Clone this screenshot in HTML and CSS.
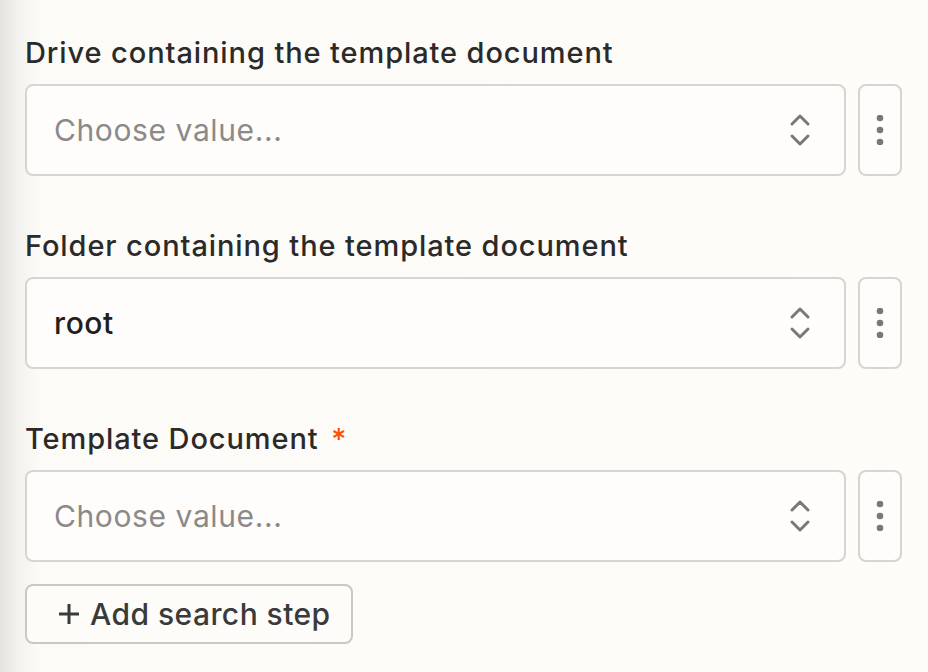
FILE: index.html
```html
<!DOCTYPE html>
<html lang="en">
<head>
    <meta charset="UTF-8">
    <meta name="viewport" content="width=device-width, initial-scale=1.0">
    <title>Template Document Fields</title>
    <link rel="stylesheet" href="styles.css">
</head>
<body>
    <div class="panel">
        <div class="field">
            <label class="field-label">Drive containing the template document</label>
            <div class="field-row">
                <div class="select-box">
                    <span class="placeholder">Choose value...</span>
                    <svg class="chevrons" width="22" height="36" viewBox="0 0 22 36"><path d="M3 12 L11 4 L19 12 M3 24 L11 32 L19 24" fill="none" stroke="#787878" stroke-width="3" stroke-linecap="round" stroke-linejoin="round"/></svg>
                </div>
                <button class="more-button" aria-label="More">
                    <svg width="8" height="30" viewBox="0 0 8 30"><circle cx="4" cy="3" r="3.3" fill="#787878"/><circle cx="4" cy="15" r="3.3" fill="#787878"/><circle cx="4" cy="27" r="3.3" fill="#787878"/></svg>
                </button>
            </div>
        </div>

        <div class="field">
            <label class="field-label">Folder containing the template document</label>
            <div class="field-row">
                <div class="select-box">
                    <span class="value">root</span>
                    <svg class="chevrons" width="22" height="36" viewBox="0 0 22 36"><path d="M3 12 L11 4 L19 12 M3 24 L11 32 L19 24" fill="none" stroke="#787878" stroke-width="3" stroke-linecap="round" stroke-linejoin="round"/></svg>
                </div>
                <button class="more-button" aria-label="More">
                    <svg width="8" height="30" viewBox="0 0 8 30"><circle cx="4" cy="3" r="3.3" fill="#787878"/><circle cx="4" cy="15" r="3.3" fill="#787878"/><circle cx="4" cy="27" r="3.3" fill="#787878"/></svg>
                </button>
            </div>
        </div>

        <div class="field last">
            <label class="field-label">Template Document <span class="required">*</span></label>
            <div class="field-row">
                <div class="select-box">
                    <span class="placeholder">Choose value...</span>
                    <svg class="chevrons" width="22" height="36" viewBox="0 0 22 36"><path d="M3 12 L11 4 L19 12 M3 24 L11 32 L19 24" fill="none" stroke="#787878" stroke-width="3" stroke-linecap="round" stroke-linejoin="round"/></svg>
                </div>
                <button class="more-button" aria-label="More">
                    <svg width="8" height="30" viewBox="0 0 8 30"><circle cx="4" cy="3" r="3.3" fill="#787878"/><circle cx="4" cy="15" r="3.3" fill="#787878"/><circle cx="4" cy="27" r="3.3" fill="#787878"/></svg>
                </button>
            </div>
        </div>

        <button class="add-step">
            <svg width="22" height="22" viewBox="0 0 22 22"><path d="M11 1 V21 M1 11 H21" stroke="#3a3a3a" stroke-width="3"/></svg>
            <span>Add search step</span>
        </button>
    </div>
</body>
</html>
```

FILE: styles.css
```css
body {
    margin: 0;
    font-family: Inter, "Noto Sans", sans-serif;
    background: linear-gradient(to right, #e4e3e0 0px, #f3f2ef 18px, #fcfbf8 40px, #fdfcf9 100%);
    color: #2b2a29;
    min-height: 672px;
}

.panel {
    padding: 36px 26px 0 25px;
}

.field {
    margin-bottom: 53px;
}

.field.last {
    margin-bottom: 22px;
}

.field-label {
    display: block;
    font-size: 29px;
    font-weight: 500;
    letter-spacing: 0.9px;
    line-height: 34px;
    margin-bottom: 14px;
    color: #2b2a29;
}

.required {
    color: #ff4f00;
    margin-left: 4px;
}

.field-row {
    display: flex;
    gap: 12px;
}

.select-box {
    flex: 1;
    height: 92px;
    box-sizing: border-box;
    border: 2px solid #d6d5ce;
    border-radius: 8px;
    background-color: #fefdfb;
    display: flex;
    align-items: center;
    padding: 0 33px 0 27px;
}

.placeholder,
.value {
    flex: 1;
    font-size: 30px;
    letter-spacing: 0.6px;
}

.placeholder {
    color: #8b8a88;
}

.value {
    color: #201f1e;
    font-weight: 500;
}

.chevrons {
    display: block;
}

.more-button {
    width: 44px;
    height: 92px;
    box-sizing: border-box;
    border: 2px solid #d6d5ce;
    border-radius: 8px;
    background-color: #fefdfb;
    display: flex;
    align-items: center;
    justify-content: center;
    padding: 0;
}

.add-step {
    display: flex;
    align-items: center;
    gap: 10px;
    width: 328px;
    height: 60px;
    box-sizing: border-box;
    border: 2px solid #c9c8c2;
    border-radius: 8px;
    background-color: #fdfcf9;
    padding: 0 0 0 31px;
    font-family: Inter, "Noto Sans", sans-serif;
    font-size: 30px;
    font-weight: 500;
    letter-spacing: 0.45px;
    color: #3a3a3a;
}

.add-step svg {
    display: block;
}
```
